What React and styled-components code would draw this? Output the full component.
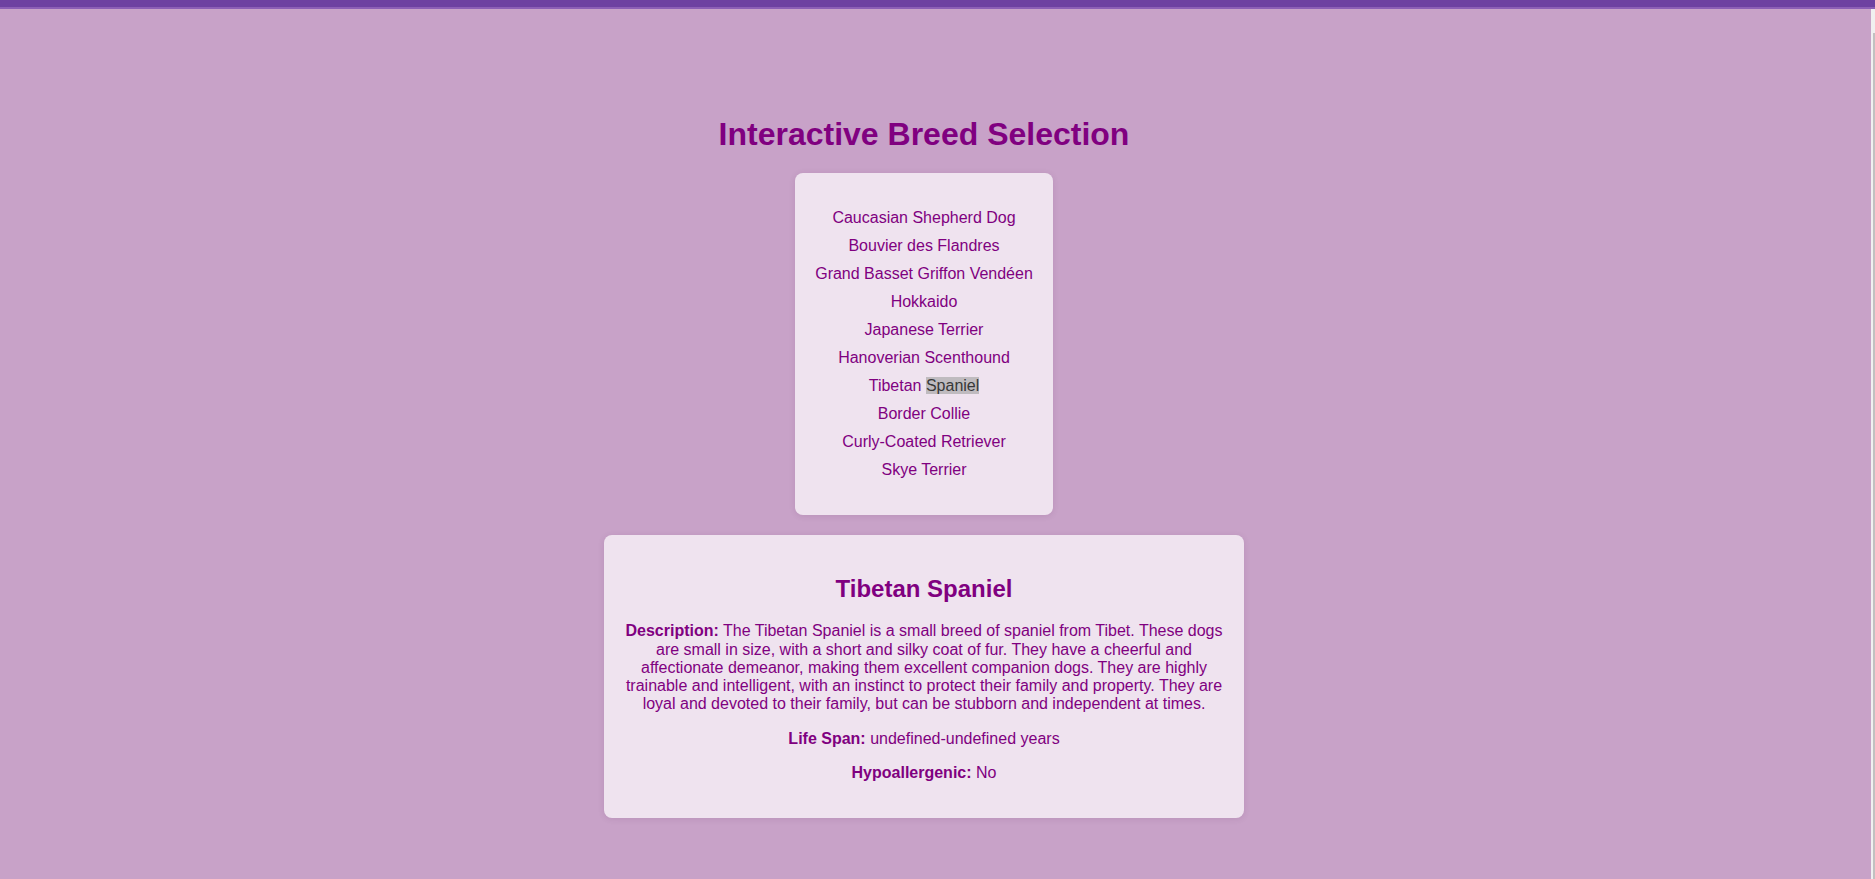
import React, { useState } from "react";
import styled, { createGlobalStyle } from "styled-components";

const GlobalStyle = createGlobalStyle`
  html, body {
    margin: 0;
    padding: 0;
    background: #c8a2c8;
    font-family: "Liberation Sans", Arial, sans-serif;
    color: #800080;
  }
  * { box-sizing: border-box; }
`;

const Page = styled.div`
  display: flex;
  flex-direction: column;
  height: 100vh;
  overflow: hidden;
`;

const TopBar = styled.div`
  height: 9px;
  flex: none;
  background: #6d41a1;
  border-bottom: 2px solid #8c5fb6;
`;

const Body = styled.div`
  flex: 1;
  display: flex;
  min-height: 0;
`;

const Main = styled.main`
  flex: 1;
  display: flex;
  flex-direction: column;
  align-items: center;
  padding: 84px 23px 0 0;
  text-align: center;
`;

const Track = styled.div`
  width: 4px;
  flex: none;
  display: flex;
  flex-direction: column;
  background: #f0f0f0;
  padding: 24px 0 0 2px;
`;

const Thumb = styled.div`
  flex: 1;
  background: #c1c1c1;
`;

const Title = styled.h1`
  font-size: 32px;
  font-weight: 700;
  line-height: 36.8px;
  margin: 23px 0 20px;
  color: #800080;
`;

const Card = styled.section`
  background: rgba(255, 255, 255, 0.7);
  border-radius: 8px;
  box-shadow: 0 1px 6px rgba(80, 30, 80, 0.12);
`;

const ListCard = styled(Card)`
  padding: 31px 20px 31px;
  margin-bottom: 20px;
`;

const BreedList = styled.ul`
  list-style: none;
  margin: 0;
  padding: 0;
`;

const BreedItem = styled.li`
  font-size: 16px;
  line-height: 18px;
  padding: 5px 0;
  color: #800080;
  cursor: pointer;
  white-space: nowrap;
`;

const Selected = styled.span`
  background: #bfbbbf;
  color: #383838;
`;

const DetailCard = styled(Card)`
  width: 640px;
  padding: 20px;
`;

const DetailTitle = styled.h2`
  font-size: 24px;
  font-weight: 700;
  line-height: 27.6px;
  margin: 19.92px 0;
  color: #800080;
`;

const Para = styled.p`
  font-size: 16px;
  line-height: 18.3px;
  margin: 16px 0;
  color: #800080;
`;

const Label = styled.strong`
  font-weight: 700;
`;

const breeds = [
  "Caucasian Shepherd Dog",
  "Bouvier des Flandres",
  "Grand Basset Griffon Vendéen",
  "Hokkaido",
  "Japanese Terrier",
  "Hanoverian Scenthound",
  "Tibetan Spaniel",
  "Border Collie",
  "Curly-Coated Retriever",
  "Skye Terrier",
];

const detail = {
  name: "Tibetan Spaniel",
  description:
    "The Tibetan Spaniel is a small breed of spaniel from Tibet. These dogs are small in size, with a short and silky coat of fur. They have a cheerful and affectionate demeanor, making them excellent companion dogs. They are highly trainable and intelligent, with an instinct to protect their family and property. They are loyal and devoted to their family, but can be stubborn and independent at times.",
  life: "undefined-undefined years",
  hypo: "No",
};

export default function App() {
  const [selected, setSelected] = useState("Tibetan Spaniel");
  return (
    <>
      <GlobalStyle />
      <Page>
        <TopBar />
        <Body>
          <Main>
            <Title>Interactive Breed Selection</Title>
            <ListCard>
              <BreedList>
                {breeds.map((b) => (
                  <BreedItem key={b} onClick={() => setSelected(b)}>
                    {b === "Tibetan Spaniel" ? (
                      <>
                        Tibetan <Selected>Spaniel</Selected>
                      </>
                    ) : (
                      b
                    )}
                  </BreedItem>
                ))}
              </BreedList>
            </ListCard>
            <DetailCard>
              <DetailTitle>{detail.name}</DetailTitle>
              <Para>
                <Label>Description:</Label> {detail.description}
              </Para>
              <Para>
                <Label>Life Span:</Label> {detail.life}
              </Para>
              <Para>
                <Label>Hypoallergenic:</Label> {detail.hypo}
              </Para>
            </DetailCard>
          </Main>
          <Track>
            <Thumb />
          </Track>
        </Body>
      </Page>
    </>
  );
}
